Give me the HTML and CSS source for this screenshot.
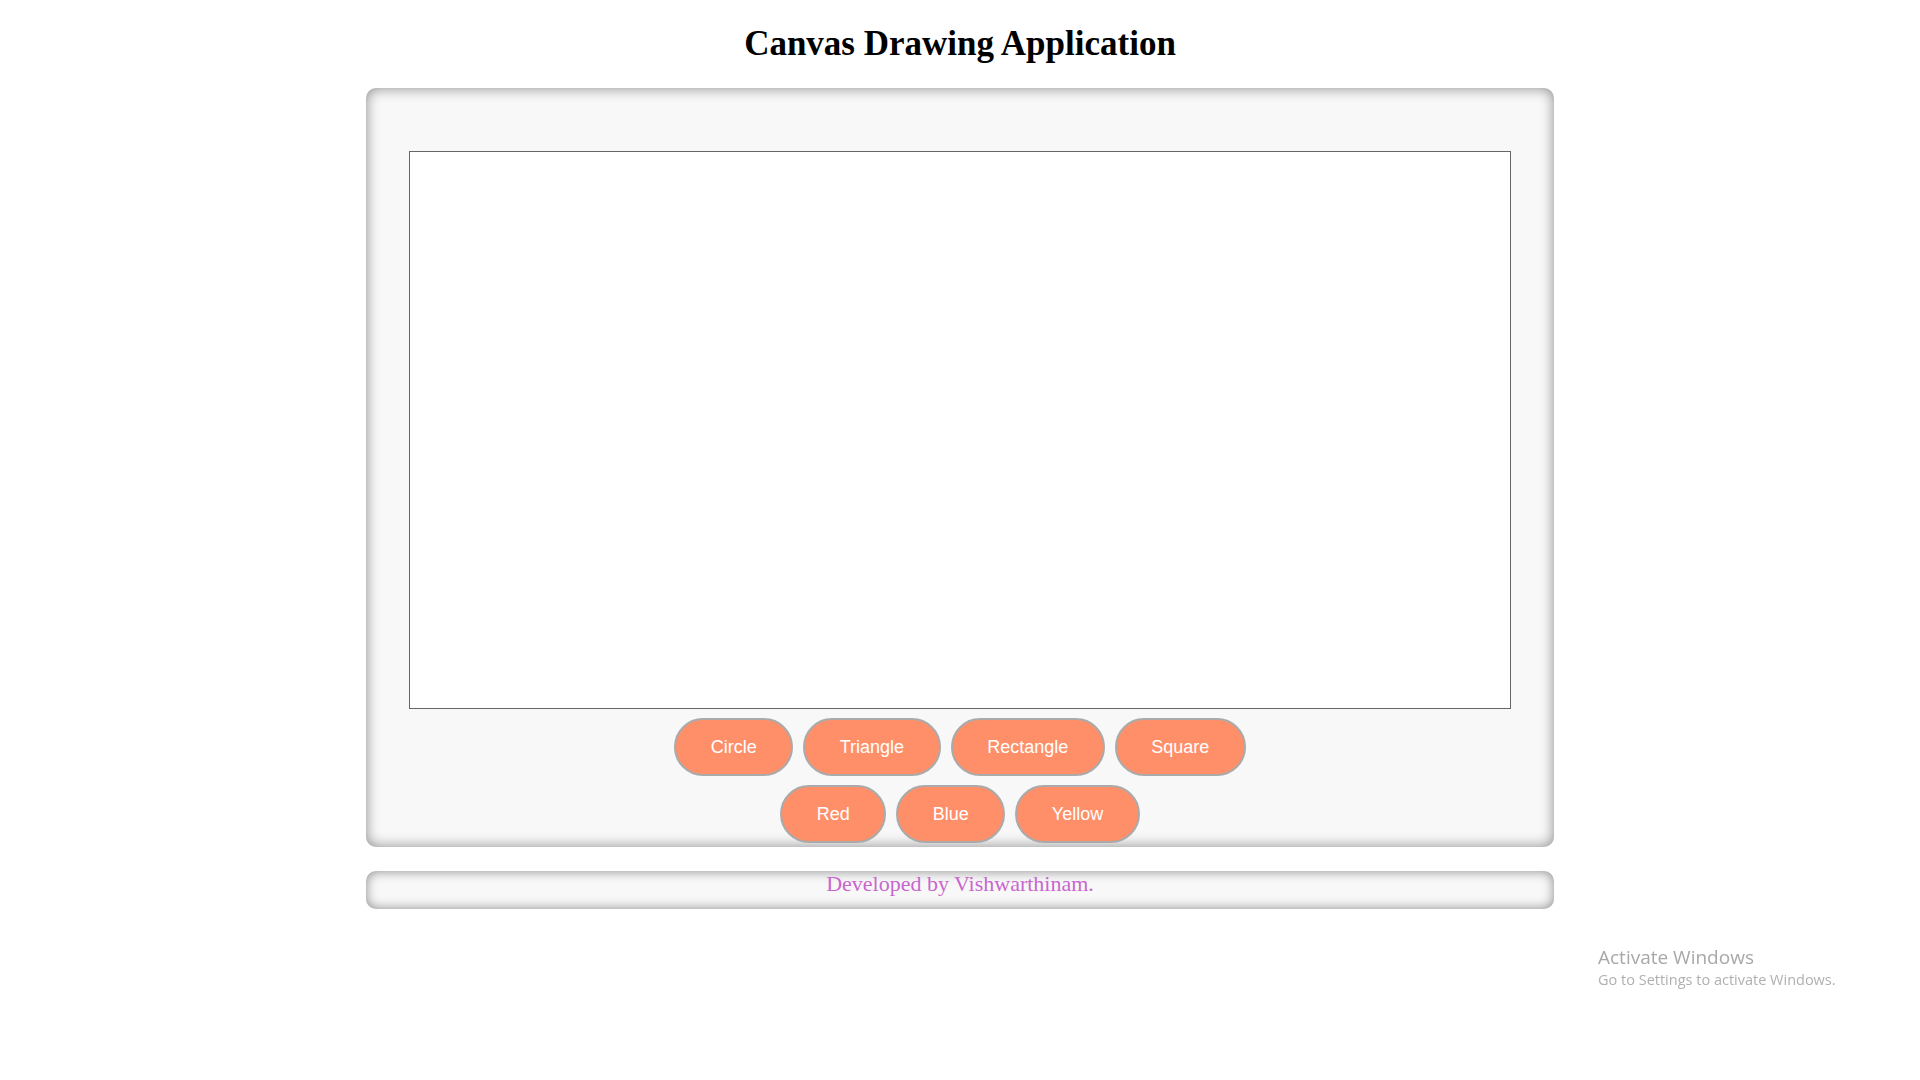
FILE: index.html
```html
<!DOCTYPE html>
<html lang="en">
<head>
<meta charset="utf-8">
<title>Canvas Drawing Application</title>
<link rel="stylesheet" href="styles.css">
</head>
<body>
  <h1 class="title">Canvas Drawing Application</h1>
  <main class="board">
    <canvas class="canvas" width="1100" height="556"></canvas>
    <div class="controls">
      <div class="row">
        <button class="btn">Circle</button>
        <button class="btn">Triangle</button>
        <button class="btn">Rectangle</button>
        <button class="btn">Square</button>
      </div>
      <div class="row">
        <button class="btn">Red</button>
        <button class="btn">Blue</button>
        <button class="btn">Yellow</button>
      </div>
    </div>
  </main>
  <footer class="footer">Developed by Vishwarthinam.</footer>
  <div class="watermark">
    <div class="wm-title">Activate Windows</div>
    <div class="wm-sub">Go to Settings to activate Windows.</div>
  </div>
</body>
</html>
```
FILE: styles.css
```css
html, body {
  margin: 0;
  padding: 0;
  background: #ffffff;
}
body {
  font-family: "Liberation Serif", "Times New Roman", serif;
  min-height: 1080px;
}
.title {
  margin: 23px 0 24px;
  font-size: 35px;
  line-height: 41px;
  font-weight: bold;
  text-align: center;
  color: #000;
}
.board {
  box-sizing: border-box;
  width: 1188px;
  height: 759px;
  margin: 0 auto;
  padding: 63px 43px 0;
  background: #f8f8f8;
  border-radius: 10px;
  box-shadow: inset 0 0 14px rgba(0, 0, 0, 0.45);
}
.canvas {
  display: block;
  width: 1100px;
  height: 556px;
  background: #ffffff;
  border: 1px solid #666666;
}
.controls {
  display: flex;
  flex-direction: column;
  gap: 9px;
  margin-top: 9px;
}
.row {
  display: flex;
  justify-content: center;
  gap: 10px;
}
.btn {
  box-sizing: border-box;
  height: 58px;
  padding: 0 34.5px;
  font-family: "Liberation Sans", Arial, sans-serif;
  font-size: 18px;
  color: #ffffff;
  background: #ff8f69;
  border: 2px solid #aaaaaa;
  border-radius: 30px;
  cursor: pointer;
}
.footer {
  box-sizing: border-box;
  width: 1188px;
  height: 38px;
  margin: 24px auto 0;
  background: #f8f8f8;
  border-radius: 10px;
  box-shadow: inset 0 0 12px rgba(0, 0, 0, 0.45);
  text-align: center;
  font-size: 22px;
  line-height: 25px;
  color: #c866cf;
}
.watermark {
  position: fixed;
  left: 1598px;
  top: 945px;
  font-family: "Open Sans", "Noto Sans", sans-serif;
  color: #a8a8a8;
}
.wm-title {
  font-size: 19px;
  line-height: 25px;
}
.wm-sub {
  font-size: 14.5px;
  line-height: 20px;
  color: #b0b0b0;
}
```
